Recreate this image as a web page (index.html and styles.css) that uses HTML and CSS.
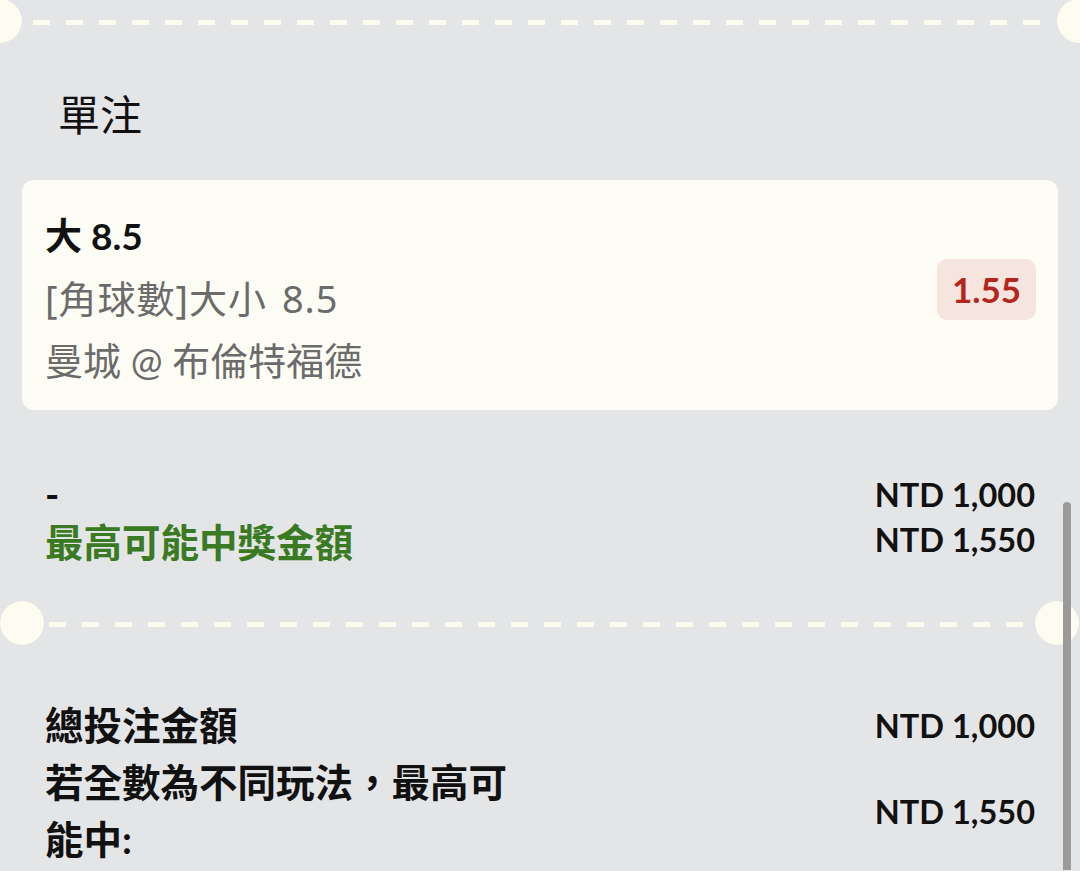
FILE: index.html
```html
<!DOCTYPE html>
<html lang="zh-Hant">
<head>
<meta charset="utf-8">
<title>單注</title>
<link rel="stylesheet" href="styles.css">
</head>
<body>
<div class="page">
  <div class="divider divider-top"></div>

  <h2 class="section-title">單注</h2>

  <div class="bet-card">
    <div class="bet-info">
      <div class="bet-pick">大 8.5</div>
      <div class="bet-market">[角球數]大小 8.5</div>
      <div class="bet-match">曼城 @ 布倫特福德</div>
    </div>
    <div class="odds-badge">1.55</div>
  </div>

  <div class="summary">
    <div class="summary-label">-</div>
    <div class="summary-value">NTD 1,000</div>
    <div class="summary-label win">最高可能中獎金額</div>
    <div class="summary-value">NTD 1,550</div>
  </div>

  <div class="divider divider-inset"></div>

  <div class="totals">
    <div class="totals-label">總投注金額</div>
    <div class="totals-value">NTD 1,000</div>
    <div class="totals-label">若全數為不同玩法，最高可能中:</div>
    <div class="totals-value">NTD 1,550</div>
  </div>

  <div class="scrollbar"></div>
</div>
</body>
</html>
```

FILE: styles.css
```css
* {
  box-sizing: border-box;
}

html, body {
  margin: 0;
  padding: 0;
}

body {
  background: #e4e5e7;
  font-family: Lato, "Noto Sans CJK TC", sans-serif;
  color: #111;
  width: 1080px;
  height: 871px;
  overflow: hidden;
}

.page {
  position: relative;
  width: 1080px;
  height: 871px;
}

/* dashed ticket dividers */
.divider {
  position: relative;
  height: 44px;
}

.divider::after {
  content: "";
  position: absolute;
  height: 5px;
  background-image: linear-gradient(to right, #fdfbee 17px, transparent 17px);
  background-size: 33px 5px;
  background-repeat: repeat-x;
}

.divider::before {
  content: "";
  position: absolute;
  top: 0;
  left: 0;
  right: 0;
  height: 44px;
  background:
    radial-gradient(circle 22px at var(--cl) 50%, #fefcf1 21.5px, transparent 22px),
    radial-gradient(circle 22px at var(--cr) 50%, #fefcf1 21.5px, transparent 22px);
}

.divider-top {
  --cl: 0px;
  --cr: 1079px;
  margin-top: -1px;
}

.divider-top::after {
  top: 21px;
  left: 33px;
  width: 1015px;
}

.divider-inset {
  --cl: 22px;
  --cr: 1057px;
  margin-top: 39px;
}

.divider-inset::after {
  top: 21px;
  left: 49px;
  width: 983px;
}

.section-title {
  margin: 43px 0 35px;
  padding-left: 58px;
  font-size: 42px;
  line-height: 59px;
  font-weight: 400;
  color: #111;
}

.bet-card {
  margin: 0 22px;
  height: 230px;
  padding: 25px 22px 19px 23px;
  background: #fefdf5;
  border-radius: 12px;
  display: flex;
  align-items: center;
  justify-content: space-between;
}

.bet-info {
  display: flex;
  flex-direction: column;
}

.bet-pick {
  font-size: 37px;
  font-weight: 700;
  line-height: 62px;
  color: #111;
}

.bet-market,
.bet-match {
  font-size: 38px;
  line-height: 62px;
  color: #6b6b6b;
}

.bet-market {
  font-family: "Noto Sans", "Noto Sans CJK TC", sans-serif;
  letter-spacing: 1px;
  word-spacing: 4px;
}

.odds-badge {
  margin-top: -18px;
  width: 99px;
  height: 61px;
  border-radius: 10px;
  background: #f6e4de;
  color: #b3261e;
  font-size: 35px;
  font-weight: 700;
  display: flex;
  align-items: center;
  justify-content: center;
}

.summary {
  margin-top: 62px;
  padding: 0 45px;
  display: grid;
  grid-template-columns: 1fr 1fr;
  grid-auto-rows: 45px;
  align-items: center;
}

.summary-label {
  font-size: 38.5px;
  font-weight: 700;
  line-height: 45px;
}

.summary-label.win {
  color: #3a7a22;
  transform: translateY(3px);
}

.summary-value,
.totals-value {
  text-align: right;
  font-size: 32.5px;
  font-weight: 700;
  color: #111;
}

.totals {
  margin-top: 52px;
  padding: 0 45px;
  display: grid;
  grid-template-columns: 1fr 1fr;
  align-items: center;
}

.totals-label {
  max-width: 480px;
  font-size: 38.5px;
  font-weight: 700;
  line-height: 57px;
}

.scrollbar {
  position: absolute;
  right: 9px;
  top: 503px;
  bottom: 0;
  width: 8px;
  border-radius: 4px 4px 0 0;
  background: #9a9a9a;
}
```
